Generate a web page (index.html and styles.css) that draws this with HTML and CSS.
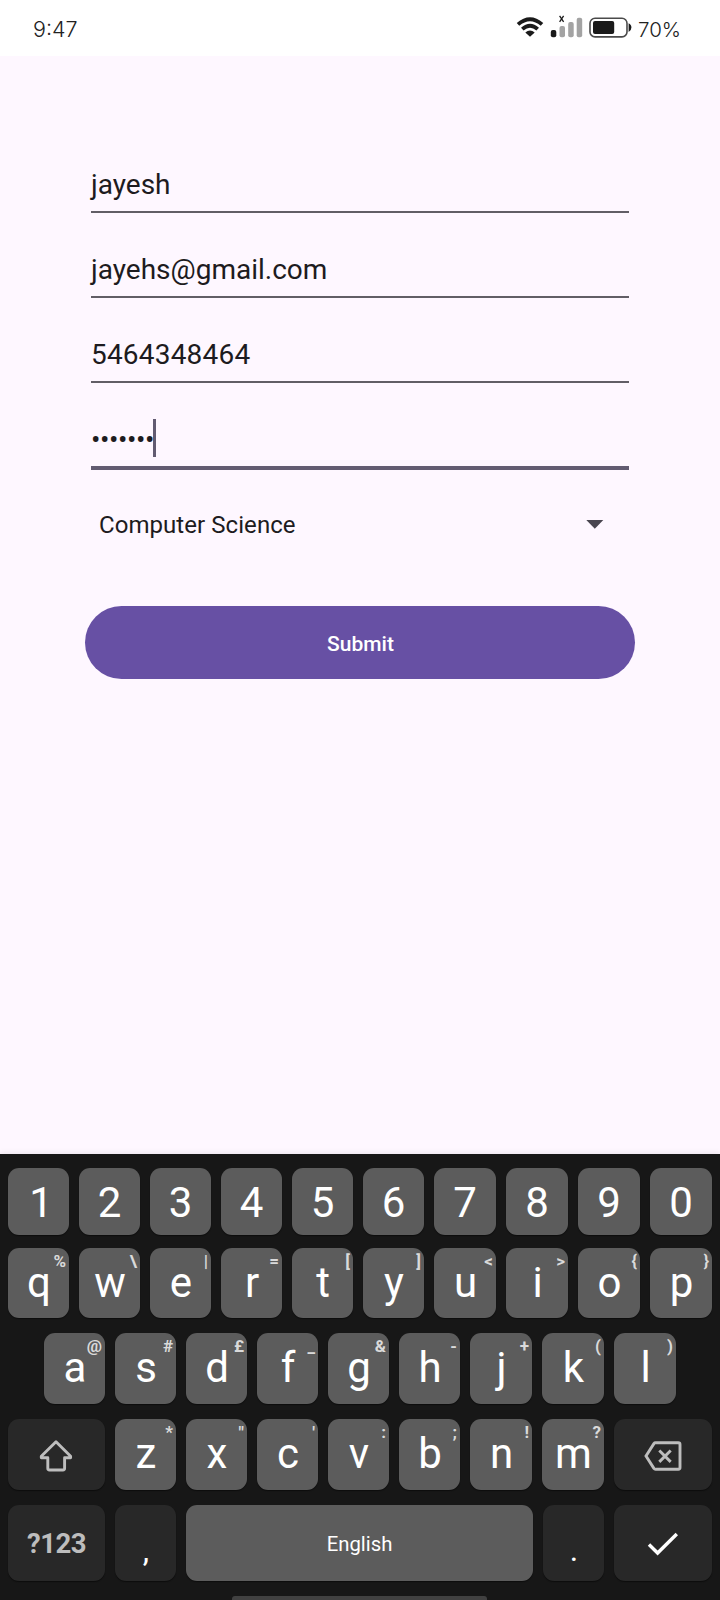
FILE: index.html
```html
<!DOCTYPE html>
<html lang="en">
<head>
<meta charset="utf-8">
<title>Registration</title>
<link rel="stylesheet" href="styles.css">
</head>
<body>
<div class="screen">
  <header class="status">
    <span class="time">9:47</span>
    <div class="status-icons">
      <svg class="wifi" width="28" height="22" viewBox="0 0 28 22">
        <g fill="none" stroke="#1a1a1a" stroke-width="3.800">
          <path d="M2 8.400Q14 -2 26 8.400"/>
          <path d="M6.300 13.100Q14 6.200 21.700 13.100"/>
        </g>
        <path d="M9.300 16.400Q14 12.400 18.700 16.400L14 20.800Z" fill="#1a1a1a"/>
      </svg>
      <svg class="signal" width="34" height="26" viewBox="0 0 34 26">
        <rect x="0.800" y="17" width="5.500" height="7.300" rx="2" fill="#1a1a1a"/>
        <rect x="9.500" y="13" width="5.500" height="11.300" rx="2" fill="#a3a3a3"/>
        <rect x="18.200" y="9" width="5.500" height="15.300" rx="2" fill="#a3a3a3"/>
        <rect x="26.700" y="4.800" width="5.500" height="19.500" rx="2" fill="#a3a3a3"/>
        <path d="M9.600 2.800l4 6M13.600 2.800l-4 6" stroke="#1a1a1a" stroke-width="1.300"/>
      </svg>
      <svg class="battery" width="44" height="22" viewBox="0 0 44 22">
        <rect x="1" y="1.300" width="37" height="18.600" rx="5" fill="none" stroke="#4a4a4a" stroke-width="1.600"/>
        <rect x="4" y="4" width="21.200" height="13" rx="2" fill="#1a1a1a"/>
        <path d="M39.600 6.300Q42.400 7.500 42.400 10.600Q42.400 13.700 39.600 15Z" fill="#1a1a1a"/>
      </svg>
      <span class="percent">70%</span>
    </div>
  </header>

  <main class="form">
    <div class="field">jayesh</div>
    <div class="field">jayehs@gmail.com</div>
    <div class="field phone">5464348464</div>
    <div class="field focused"><span class="dots">•••••••</span><span class="caret"></span></div>
    <div class="spinner"><span>Computer Science</span>
      <svg width="18" height="9" viewBox="0 0 18 9"><path d="M0.300 0H17.300L8.800 8.800Z" fill="#49454f"/></svg>
    </div>
    <button class="submit">Submit</button>
  </main>

  <section class="keyboard">
    <div class="row numbers">
      <div class="key one">1</div><div class="key">2</div><div class="key">3</div><div class="key">4</div><div class="key">5</div><div class="key">6</div><div class="key">7</div><div class="key">8</div><div class="key">9</div><div class="key">0</div>
    </div>
    <div class="row top">
      <div class="key">q<i>%</i></div><div class="key">w<i>\</i></div><div class="key">e<i>|</i></div><div class="key">r<i>=</i></div><div class="key">t<i>[</i></div><div class="key">y<i>]</i></div><div class="key">u<i>&lt;</i></div><div class="key">i<i>&gt;</i></div><div class="key">o<i>{</i></div><div class="key">p<i>}</i></div>
    </div>
    <div class="row home">
      <div class="key">a<i>@</i></div><div class="key">s<i>#</i></div><div class="key">d<i>£</i></div><div class="key">f<i>_</i></div><div class="key">g<i>&amp;</i></div><div class="key">h<i>-</i></div><div class="key">j<i>+</i></div><div class="key">k<i>(</i></div><div class="key">l<i>)</i></div>
    </div>
    <div class="row lower">
      <div class="key dark action">
        <svg class="shift" width="34" height="34" viewBox="0 0 34 34"><path d="M17 2.700L31.600 17.200V18.700H25.600V29.300Q25.600 31 23.900 31H10.500Q8.800 31 8.800 29.300V18.700H2.300V17.200Z" fill="none" stroke="#bdbdbd" stroke-width="2.900" stroke-linejoin="round"/></svg>
      </div>
      <div class="key">z<i>*</i></div><div class="key">x<i>"</i></div><div class="key">c<i>'</i></div><div class="key">v<i>:</i></div><div class="key">b<i>;</i></div><div class="key">n<i>!</i></div><div class="key">m<i>?</i></div>
      <div class="key dark action">
        <svg class="erase" width="38" height="30" viewBox="0 0 38 30"><path d="M11.500 1.800H34.300Q36 1.800 36 3.500V26.500Q36 28.200 34.300 28.200H11.500Q10.500 28.200 9.900 27.400L2 15L9.900 2.600Q10.500 1.800 11.500 1.800ZM15.300 9.500L26.700 20.900M26.700 9.500L15.300 20.900" fill="none" stroke="#bdbdbd" stroke-width="2.900"/></svg>
      </div>
    </div>
    <div class="row bottom">
      <div class="key dark symbols">?123</div>
      <div class="key dark punct">,</div>
      <div class="key space">English</div>
      <div class="key dark punct">.</div>
      <div class="key dark action"><svg class="check" width="32" height="24" viewBox="0 0 32 24"><path d="M2 12.500L10.600 21L29.800 2" fill="none" stroke="#fff" stroke-width="3.400"/></svg></div>
    </div>
    <div class="handle"></div>
  </section>
</div>
</body>
</html>
```

FILE: styles.css
```css
* { box-sizing: border-box; }

body {
  margin: 0;
  font-family: Roboto, "Liberation Sans", sans-serif;
}

.screen {
  display: flex;
  flex-direction: column;
  width: 720px;
  height: 1600px;
  background: #fef7ff;
  overflow: hidden;
}

/* Status bar */
.status {
  display: flex;
  justify-content: space-between;
  height: 56px;
  padding: 0 38px 0 33px;
  background: #fff;
  color: #222;
  font-family: Inter, sans-serif;
  font-weight: 300;
}
.time { font-size: 21.500px; line-height: 58px; }
.status-icons { display: flex; align-items: flex-start; }
.wifi { margin: 16px 6px 0 0; }
.signal { margin: 13px 5px 0 0; }
.battery { margin: 17px 5px 0 0; }
.percent { width: 44px; font-size: 20.500px; line-height: 60px; }

/* Form */
.form {
  flex: 1;
  display: flex;
  flex-direction: column;
  padding: 109px 85px 0;
}
.field {
  height: 48px;
  margin: 0 6px 37px;
  border-bottom: 2px solid #625e66;
  color: #1d1b20;
  font-size: 28px;
  line-height: 40px;
}
.phone { letter-spacing: 0.200px; }
.focused {
  display: flex;
  height: 51px;
  margin: -1px 6px 34px;
  border-bottom: 4px solid #625b71;
}
.dots { width: 62px; letter-spacing: -0.450px; line-height: 42px; }
.caret { width: 3px; height: 38px; background: #625b71; }
.spinner {
  display: flex;
  justify-content: space-between;
  align-items: center;
  height: 42px;
  padding: 0 31px 0 14px;
  color: #1d1b20;
  font-size: 24px;
  letter-spacing: 0.060px;
}
.spinner svg { margin-bottom: 2px; }
.submit {
  height: 73px;
  margin-top: 60px;
  padding: 3px 0 0 1px;
  border: 0;
  border-radius: 37px;
  background: #6750a4;
  color: #fff;
  font: 500 21px Roboto, sans-serif;
}

/* Keyboard */
.keyboard {
  height: 446px;
  padding: 14px 8px 0;
  background: #171717;
  box-shadow: 0 -1px 6px rgba(0, 0, 0, 0.08);
}
.row { display: grid; column-gap: 10px; }
.numbers, .top { grid-template-columns: repeat(6, 61px) repeat(4, 62px); }
.numbers { height: 67px; margin-bottom: 13px; }
.top { height: 70px; margin-bottom: 15px; }
.home {
  grid-template-columns: repeat(6, 61px) repeat(3, 62px);
  height: 71px;
  margin: 0 0 15px 36px;
}
.lower {
  grid-template-columns: 97px repeat(5, 61px) repeat(2, 62px) 98px;
  height: 71px;
  margin-bottom: 15px;
}
.bottom {
  grid-template-columns: 97px 61px 347px 61px 98px;
  height: 76px;
  margin-bottom: 15px;
}
.key {
  position: relative;
  display: flex;
  justify-content: center;
  align-items: center;
  padding: 0 0 1px 1px;
  border-radius: 11px;
  background: #5c5c5c;
  box-shadow: 0 1px 1px #0d0d0d;
  color: #fff;
  font-size: 42px;
  line-height: 50px;
}
.numbers .key { padding: 3px 0 0; }
.numbers .one { padding-left: 5px; }
.key i {
  position: absolute;
  top: 3px;
  right: 3px;
  color: #dadada;
  font-size: 17px;
  font-style: normal;
  font-weight: 700;
  line-height: 20px;
}
.key.dark { background: #282828; }
.action { padding: 2px 1px 0 0; }
.symbols { padding: 2px 0 0; color: #bdbdbd; font-size: 27.500px; font-weight: 700; letter-spacing: -0.500px; }
.punct { padding: 13px 0 0 1px; font-size: 32px; }
.space { padding: 1px 0 0; font-size: 20.300px; }
.handle {
  width: 255px;
  height: 6px;
  margin: 0 0 0 224px;
  border-radius: 3px;
  background: #414141;
}
```
